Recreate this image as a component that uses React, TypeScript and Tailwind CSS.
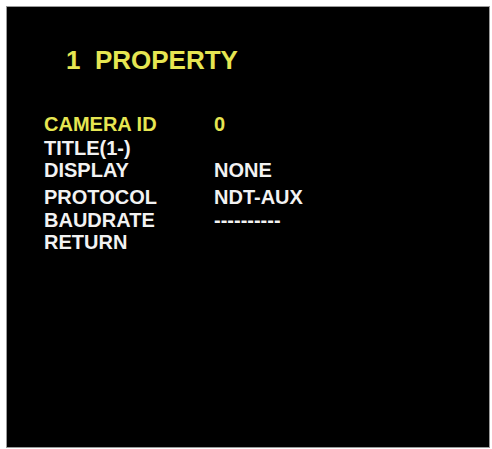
const rows = [
  { label: 'CAMERA ID', value: '0', active: true, gap: 'mt-[42px]' },
  { label: 'TITLE(1-)', value: '', active: false, gap: 'mt-[5px]' },
  { label: 'DISPLAY', value: 'NONE', active: false, gap: 'mt-[3px]' },
  { label: 'PROTOCOL', value: 'NDT-AUX', active: false, gap: 'mt-[8px]' },
  { label: 'BAUDRATE', value: '----------', active: false, gap: 'mt-[4px]' },
  { label: 'RETURN', value: '', active: false, gap: 'mt-[3px]' },
];

export default function App() {
  return (
    <div className="w-[492px] h-[449px] bg-white pt-[6px] pl-[6px] font-['Liberation_Sans',Arial,sans-serif] font-bold">
      {/* OSD screen */}
      <div className="w-[484px] h-[442px] bg-black border border-[#9a9a9a] pt-[40px]">
        <h1 className="pl-[59px] text-[26px] leading-[26px] text-[#e6e652] whitespace-pre">1  PROPERTY</h1>

        <div className="flex flex-col pl-[37px]">
          {rows.map((row) => (
            <div
              key={row.label}
              className={`flex text-[20px] leading-[19px] ${row.gap} ${row.active ? 'text-[#e6e652]' : 'text-[#f2f2f2]'}`}
            >
              <span className="w-[170px]">{row.label}</span>
              <span>{row.value}</span>
            </div>
          ))}
        </div>
      </div>
    </div>
  );
}
